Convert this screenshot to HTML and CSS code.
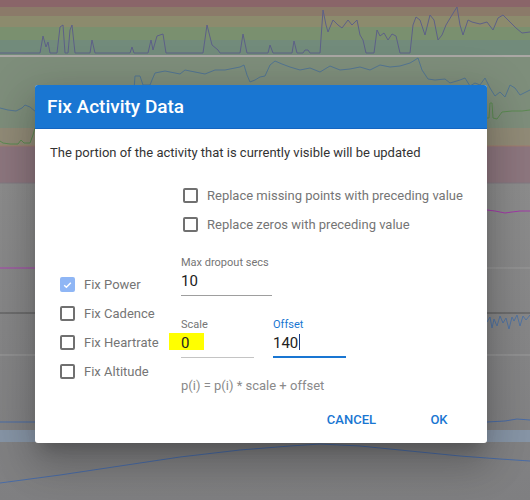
FILE: index.html
```html
<!DOCTYPE html>
<html>
<head>
<meta charset="utf-8">
<link rel="stylesheet" href="styles.css">
</head>
<body>
<div class="screen">
  <svg class="chart" width="530" height="500" viewBox="0 0 530 500">
    <defs>
      <linearGradient id="bgGray" x1="0" y1="0" x2="0" y2="1">
        <stop offset="0" stop-color="#8c8c8c"/>
        <stop offset="1" stop-color="#7f7f81"/>
      </linearGradient>
    </defs>
    <rect x="0" y="0" width="530" height="7" fill="#8a6569"/>
    <rect x="0" y="7" width="530" height="9" fill="#8b7a69"/>
    <rect x="0" y="16" width="530" height="11" fill="#8c8b6d"/>
    <rect x="0" y="27" width="530" height="13" fill="#7a906f"/>
    <rect x="0" y="40" width="530" height="15" fill="#728b7b"/>
    <rect x="0" y="55" width="530" height="2" fill="#aaa7a4"/>
    <rect x="0" y="57" width="530" height="71" fill="#7e8e7b"/>
    <rect x="0" y="128" width="530" height="18" fill="#918b77"/>
    <rect x="0" y="146" width="530" height="37" fill="#8d767e"/>
    <rect x="0" y="183" width="530" height="317" fill="url(#bgGray)"/>
    <line x1="0" y1="146" x2="530" y2="146" stroke="#a07a6e" stroke-width="1"/>
    <line x1="0" y1="183" x2="530" y2="183" stroke="#807880" stroke-width="1"/>
    <line x1="0" y1="268" x2="530" y2="268" stroke="#9a9a9a" stroke-width="1"/>
    <line x1="0" y1="313" x2="530" y2="313" stroke="#555555" stroke-width="1"/>
    <line x1="0" y1="355" x2="530" y2="355" stroke="#9c9c9c" stroke-width="1"/>
    <rect x="0" y="430" width="530" height="12" fill="#8795a6"/>
    <polyline class="ln-power" points="0,53 40,53 43,36 46,47 48,42 50,53 57,53 60,27 63,25 65,53 68,53 70,30 72,25 75,53 90,53 92,40 95,53 130,53 132,47 134,53 148,53 151,40 153,50 155,43 157,36 163,34 166,53 203,53 207,25 212,45 218,50 220,53 240,53 243,34 247,53 268,53 270,45 273,53 292,53 294,41 297,53 303,53 305,50 308,50 310,53 320,53 323,10 326,25 328,32 333,20 338,25 342,28 348,20 352,25 357,20 360,35 363,40 366,53 374,53 377,30 380,36 384,33 388,40 392,34 396,36 400,53 410,53 413,25 416,17 420,20 425,35 430,15 434,20 438,40 442,35 446,25 452,15 457,7 460,25 463,35 468,20 472,22 480,24 487,22 493,30 498,18 503,15 510,22 516,28 522,33 530,32"/>
    <polyline class="ln-blue" points="134,90 135,76 140,76 143,85 150,85 152,80 155,73 165,71 180,74 185,70 195,72 205,74 215,70 225,70 240,67 244,65 247,75 250,82 255,80 260,77 265,76 270,65 275,61 282,64 290,67 300,70 310,68 320,72 330,66 340,70 350,69 360,67 370,70 380,65 390,67 400,66 410,63 415,60 418,58 422,70 428,79 435,80 445,79 450,83 460,80 465,78 470,86 475,83 480,85 485,78 490,88 495,96 500,92 505,97 510,85 515,88 520,95 530,90"/>
    <polyline class="ln-blue" points="0,108 8,110 16,111 22,108 25,105 30,107 36,112"/>
    <polyline class="ln-green" points="0,141 3,143 10,144 18,144 21,140 24,143 30,143 33,135 35,128"/>
    <polyline class="ln-green" points="486,118 489,118 490,103 492,103 493,118 497,119 502,112 512,111 522,111 530,110"/>
    <polyline class="ln-purple" points="0,268 36,268"/>
    <polyline class="ln-purple" points="487,210 495,211 505,213 512,212 520,211 530,211"/>
    <polyline class="ln-noise" points="487,322 490,317 492,328 494,319 497,326 500,316 503,323 506,318 509,329 512,317 514,321 517,315 520,326 523,316 526,320 530,315"/>
    <polyline class="ln-curve" points="0,422 35,422"/>
    <polyline class="ln-curve" points="487,422 505,421 517,419 530,420"/>
    <polyline class="ln-curve" points="0,483 60,475 120,466 180,457 240,450 290,446 320,444 360,446 410,451 460,456 500,459 530,461"/>
  </svg>

  <div class="dialog">
    <div class="dlg-title">Fix Activity Data</div>
    <div class="dlg-content">
      <p class="intro">The portion of the activity that is currently visible will be updated</p>
      <div class="grid">
        <div class="left-col">
          <label class="cb-row"><span class="cb cb-on"><svg width="14" height="14" viewBox="0 0 14 14"><path d="M2.8 7.2 L5.6 10 L11.2 4" fill="none" stroke="#fff" stroke-width="1.8"/></svg></span>Fix Power</label>
          <label class="cb-row"><span class="cb"></span>Fix Cadence</label>
          <label class="cb-row"><span class="cb"></span>Fix Heartrate</label>
          <label class="cb-row"><span class="cb"></span>Fix Altitude</label>
        </div>
        <div class="right-col">
          <label class="cb-row cb-row-r"><span class="cb"></span>Replace missing points with preceding value</label>
          <label class="cb-row cb-row-r"><span class="cb"></span>Replace zeros with preceding value</label>
          <div class="field field-wide">
            <div class="f-label">Max dropout secs</div>
            <div class="f-value">10</div>
          </div>
          <div class="field-row">
            <div class="field field-short">
              <div class="f-label">Scale</div>
              <div class="f-value f-mark"><span class="hl"></span><span class="val">0</span></div>
            </div>
            <div class="field field-short field-focus">
              <div class="f-label">Offset</div>
              <div class="f-value">140<span class="caret"></span></div>
            </div>
          </div>
          <div class="formula">p(i) = p(i) * scale + offset</div>
        </div>
      </div>
    </div>
    <div class="actions">
      <button class="btn">Cancel</button>
      <button class="btn">OK</button>
    </div>
  </div>
</div>
</body>
</html>
```
FILE: styles.css
```css
* { box-sizing: border-box; }
html, body { margin: 0; padding: 0; }
body {
  width: 530px;
  height: 500px;
  overflow: hidden;
  font-family: Roboto, "Noto Sans", "Liberation Sans", sans-serif;
  background: #8b8b8b;
}
.screen {
  position: relative;
  width: 530px;
  height: 500px;
}
.chart {
  position: absolute;
  left: 0;
  top: 0;
  display: block;
}
.chart polyline { fill: none; stroke-width: 1; stroke-linejoin: round; }
.ln-power { stroke: #5d6088; }
.ln-blue { stroke: #537592; }
.ln-green { stroke: #5c8a52; }
.ln-purple { stroke: #a23aa8; }
.ln-noise { stroke: #5274a2; }
.ln-curve { stroke: #4a6ca6; }

.dialog {
  position: absolute;
  left: 35px;
  top: 85px;
  width: 452px;
  height: 358px;
  background: #fff;
  border-radius: 3px;
  overflow: hidden;
  box-shadow: 0 11px 15px -7px rgba(0,0,0,.2), 0 24px 38px 3px rgba(0,0,0,.14), 0 9px 46px 8px rgba(0,0,0,.12);
  display: flex;
  flex-direction: column;
}
.dlg-title {
  height: 44px;
  background: #1976d2;
  border-bottom: 1px solid #1565c0;
  color: #fff;
  font-size: 19px;
  font-weight: 500;
  line-height: 43px;
  padding-left: 12px;
}
.dlg-content {
  padding: 14px 15px 0 15px;
}
.intro {
  margin: 0 0 18px 0;
  font-size: 13px;
  line-height: 20px;
  color: #333;
}
.grid {
  display: grid;
  grid-template-columns: 121px 1fr;
  margin-left: 10px;
}
.left-col {
  margin-top: 89px;
  display: flex;
  flex-direction: column;
}
.right-col {
  display: flex;
  flex-direction: column;
}
.cb-row {
  display: flex;
  align-items: center;
  height: 29px;
  font-size: 13px;
  color: #757575;
  white-space: nowrap;
}
.cb-row-r { padding-left: 2px; }
.cb {
  width: 15px;
  height: 15px;
  border: 2px solid #707070;
  border-radius: 2px;
  margin-right: 9px;
  flex: none;
  display: flex;
  align-items: center;
  justify-content: center;
}
.cb-on {
  background: #8fb6f5;
  border-color: #8fb6f5;
}
.cb-on svg { display: block; }

.field { display: flex; flex-direction: column; }
.field-wide { width: 91px; margin-top: 16px; }
.field-short { width: 73px; }
.f-label {
  font-size: 11px;
  line-height: 16px;
  color: #757575;
  white-space: nowrap;
}
.f-value {
  font-size: 15px;
  line-height: 20px;
  color: #212121;
  padding-bottom: 4px;
  border-bottom: 1px solid #9e9e9e;
}
.field-row {
  display: flex;
  gap: 19px;
  margin-top: 21px;
}
.field-short .f-value { border-bottom-color: #c4c4c4; }
.field-focus .f-label { color: #1976d2; }
.field-focus .f-value {
  padding-bottom: 3px;
  border-bottom: 2px solid #1976d2;
}
.f-mark { position: relative; }
.hl {
  position: absolute;
  left: -12px;
  top: 0;
  width: 35px;
  height: 17px;
  background: #ffff00;
}
.val { position: relative; }
.caret {
  display: inline-block;
  width: 1px;
  height: 16px;
  background: #1a3f8a;
  vertical-align: -2px;
  margin-left: 1px;
}
.formula {
  margin-top: 19px;
  font-size: 13px;
  line-height: 18px;
  color: #8a8a8a;
}
.actions {
  display: flex;
  justify-content: flex-end;
  gap: 15px;
  padding: 6px 16px 5px 0;
}
.btn {
  height: 36px;
  min-width: 64px;
  padding: 0 16px;
  border: none;
  background: transparent;
  color: #1976d2;
  font-family: Roboto, "Noto Sans", sans-serif;
  font-size: 13px;
  font-weight: 500;
  text-transform: uppercase;
}
```
